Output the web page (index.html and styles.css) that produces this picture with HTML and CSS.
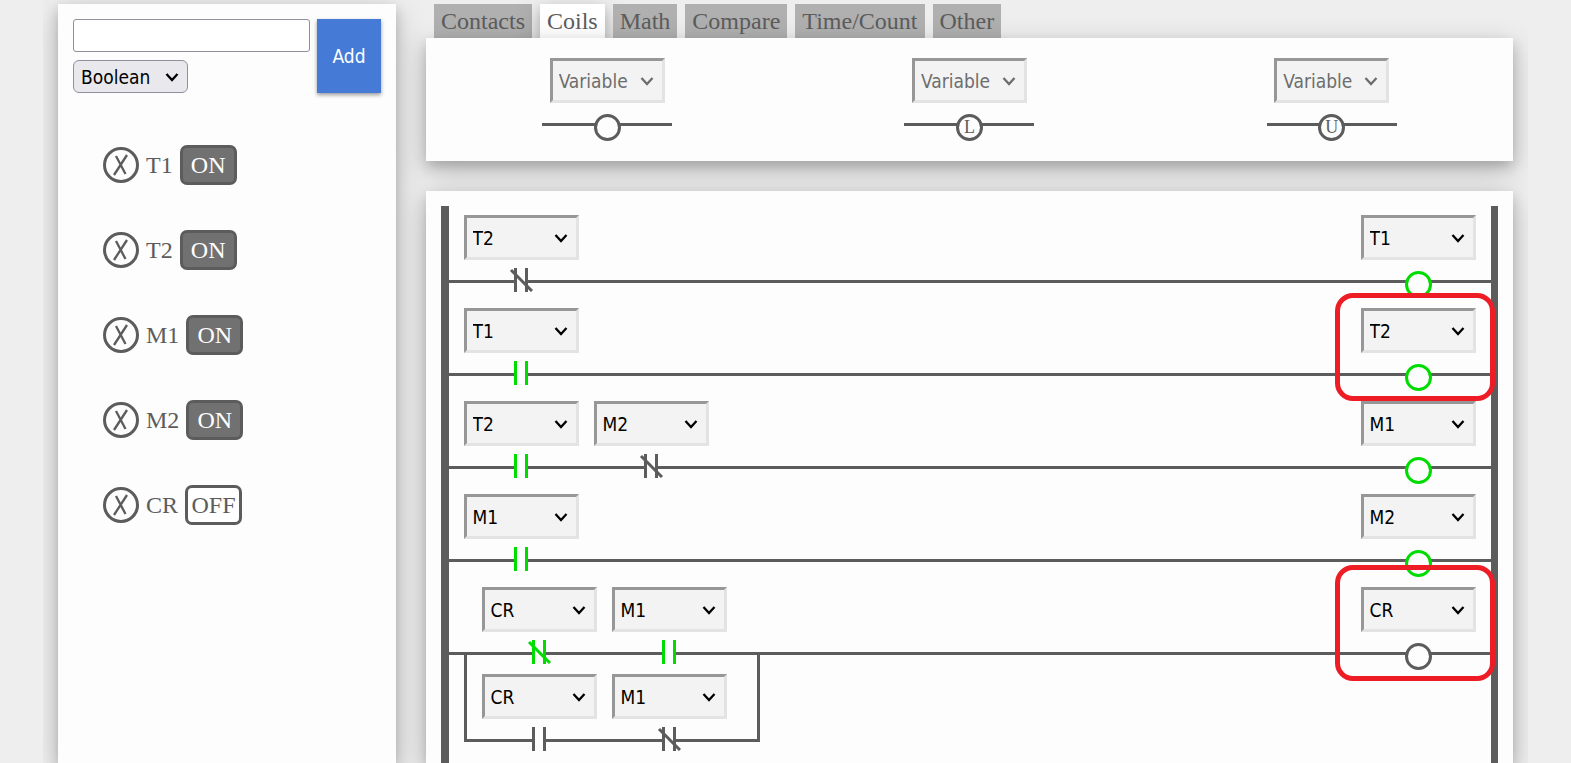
FILE: index.html
```
<!DOCTYPE html>
<html lang="en">
<head>
    <meta charset="UTF-8">
    <meta name="viewport" content="width=device-width, initial-scale=1.0">
    <title>Ladder Logic</title>
    <link rel="stylesheet" href="styles.css">
</head>
<body>
    <!-- Shared symbols -->
    <svg class="defs" aria-hidden="true">
        <symbol id="xio" viewBox="0 0 24 24">
            <rect class="gap" x="8" y="0" width="8" height="24"/>
            <path d="M6.500 0V24M17.500 0V24"/>
            <path d="M2 2L23 23"/>
        </symbol>
        <symbol id="xic" viewBox="0 0 24 24">
            <rect class="gap" x="8" y="0" width="8" height="24"/>
            <path d="M6.500 0V24M17.500 0V24"/>
        </symbol>
        <symbol id="cross" viewBox="0 0 30 30">
            <path d="M10 6L19.500 24M21 5L8 25"/>
        </symbol>
    </svg>

    <div class="app">
        <aside class="panel variables">
            <form class="add-form">
                <div class="fields">
                    <input type="text" class="name-input" aria-label="Variable name">
                    <select class="type-select" aria-label="Variable type">
                        <option>Boolean</option>
                        <option>Number</option>
                    </select>
                </div>
                <button type="button" class="add-btn">Add</button>
            </form>
            <ul class="variable-list">
                <li>
                    <button class="delete-btn" aria-label="Delete T1"><svg><use href="#cross"/></svg></button>
                    <span>T1</span>
                    <button class="toggle on">ON</button>
                </li>
                <li>
                    <button class="delete-btn" aria-label="Delete T2"><svg><use href="#cross"/></svg></button>
                    <span>T2</span>
                    <button class="toggle on">ON</button>
                </li>
                <li>
                    <button class="delete-btn" aria-label="Delete M1"><svg><use href="#cross"/></svg></button>
                    <span>M1</span>
                    <button class="toggle on">ON</button>
                </li>
                <li>
                    <button class="delete-btn" aria-label="Delete M2"><svg><use href="#cross"/></svg></button>
                    <span>M2</span>
                    <button class="toggle on">ON</button>
                </li>
                <li>
                    <button class="delete-btn" aria-label="Delete CR"><svg><use href="#cross"/></svg></button>
                    <span>CR</span>
                    <button class="toggle">OFF</button>
                </li>
            </ul>
        </aside>

        <main class="workspace">
            <nav class="tabs">
                <button class="tab">Contacts</button>
                <button class="tab active">Coils</button>
                <button class="tab">Math</button>
                <button class="tab">Compare</button>
                <button class="tab">Time/Count</button>
                <button class="tab">Other</button>
            </nav>

            <section class="panel toolbox">
                <div class="tool">
                    <div class="cell wire">
                        <select class="var-select" aria-label="Coil variable" disabled><option>Variable</option></select>
                        <div class="coil"></div>
                    </div>
                </div>
                <div class="tool">
                    <div class="cell wire">
                        <select class="var-select" aria-label="Latch variable" disabled><option>Variable</option></select>
                        <div class="coil">L</div>
                    </div>
                </div>
                <div class="tool">
                    <div class="cell wire">
                        <select class="var-select" aria-label="Unlatch variable" disabled><option>Variable</option></select>
                        <div class="coil">U</div>
                    </div>
                </div>
            </section>

            <section class="panel program">
                <div class="ladder">
                    <div class="rung wire">
                        <div class="cell">
                            <select class="var-select" aria-label="Contact"><option>T2</option></select>
                            <svg class="contact"><use href="#xio"/></svg>
                        </div>
                        <div class="cell output">
                            <select class="var-select" aria-label="Coil"><option>T1</option></select>
                            <div class="coil live"></div>
                        </div>
                    </div>

                    <div class="rung wire">
                        <div class="cell">
                            <select class="var-select" aria-label="Contact"><option>T1</option></select>
                            <svg class="contact live"><use href="#xic"/></svg>
                        </div>
                        <div class="cell output marked">
                            <select class="var-select" aria-label="Coil"><option>T2</option></select>
                            <div class="coil live"></div>
                        </div>
                    </div>

                    <div class="rung wire">
                        <div class="cell">
                            <select class="var-select" aria-label="Contact"><option>T2</option></select>
                            <svg class="contact live"><use href="#xic"/></svg>
                        </div>
                        <div class="cell">
                            <select class="var-select" aria-label="Contact"><option>M2</option></select>
                            <svg class="contact"><use href="#xio"/></svg>
                        </div>
                        <div class="cell output">
                            <select class="var-select" aria-label="Coil"><option>M1</option></select>
                            <div class="coil live"></div>
                        </div>
                    </div>

                    <div class="rung wire">
                        <div class="cell">
                            <select class="var-select" aria-label="Contact"><option>M1</option></select>
                            <svg class="contact live"><use href="#xic"/></svg>
                        </div>
                        <div class="cell output">
                            <select class="var-select" aria-label="Coil"><option>M2</option></select>
                            <div class="coil live"></div>
                        </div>
                    </div>

                    <div class="rung wire">
                        <div class="branch">
                            <div class="path">
                                <div class="cell">
                                    <select class="var-select" aria-label="Contact"><option>CR</option></select>
                                    <svg class="contact live"><use href="#xio"/></svg>
                                </div>
                                <div class="cell">
                                    <select class="var-select" aria-label="Contact"><option>M1</option></select>
                                    <svg class="contact live"><use href="#xic"/></svg>
                                </div>
                            </div>
                            <div class="path">
                                <div class="cell">
                                    <select class="var-select" aria-label="Contact"><option>CR</option></select>
                                    <svg class="contact"><use href="#xic"/></svg>
                                </div>
                                <div class="cell">
                                    <select class="var-select" aria-label="Contact"><option>M1</option></select>
                                    <svg class="contact"><use href="#xio"/></svg>
                                </div>
                            </div>
                        </div>
                        <div class="cell output marked tall">
                            <select class="var-select" aria-label="Coil"><option>CR</option></select>
                            <div class="coil"></div>
                        </div>
                    </div>
                </div>
            </section>
        </main>
    </div>
</body>
</html>
```

FILE: styles.css
```
:root {
    --ink: #5c5c5c;
    --paper: #fdfdfd;
    --live: #00dc00;
    --shadow: 0 6px 12px rgba(0, 0, 0, 0.2), 0 9px 30px rgba(0, 0, 0, 0.19);
    --ui-font: "DejaVu Sans Condensed", "DejaVu Sans", sans-serif;
}
* {
    box-sizing: border-box;
}
body {
    margin: 0;
    background: #eee;
    color: var(--ink);
    font-family: "Liberation Serif", serif;
    font-size: 24px;
}
button, select, input {
    margin: 0;
    font: inherit;
    color: inherit;
}
.defs {
    position: absolute;
    width: 0;
    height: 0;
}
.app {
    display: flex;
    gap: 30px;
    height: 100vh;
    margin: 0 43px;
    padding: 4px 15px 0;
    overflow: hidden;
}
.panel {
    background: var(--paper);
    box-shadow: var(--shadow);
}

/* Variables */
.variables {
    flex: none;
    width: 338px;
    padding: 15px;
}
.add-form {
    display: flex;
    gap: 7px;
    font-family: var(--ui-font);
    font-size: 19px;
}
.fields {
    flex: 1;
    display: flex;
    flex-direction: column;
    align-items: flex-start;
    gap: 8px;
}
.name-input {
    width: 100%;
    height: 33px;
    border: 1px solid #8f8f9d;
    border-radius: 3px;
    background: white;
}
select {
    appearance: none;
    background-image: url("data:image/svg+xml,%3Csvg xmlns='http://www.w3.org/2000/svg' width='14' height='10'%3E%3Cpath d='M1.500 2L7 8L12.500 2' fill='none' stroke='black' stroke-width='2.300'/%3E%3C/svg%3E");
    background-repeat: no-repeat;
    background-position: right 8px center;
    color: black;
}
.type-select {
    width: 115px;
    height: 33px;
    padding: 0 7px;
    border: 1px solid #8f8f9d;
    border-radius: 6px;
    background-color: #e9e9ed;
}
.add-btn {
    width: 64px;
    padding: 0;
    border: none;
    background: #457ad6;
    color: white;
    box-shadow: 0 2px 4px rgba(0, 0, 0, 0.4);
}
.variable-list {
    display: flex;
    flex-direction: column;
    gap: 45px;
    margin: 52px 0 0;
    padding: 0 30px;
    list-style: none;
}
.variable-list li {
    display: flex;
    align-items: center;
    gap: 7px;
}
.delete-btn {
    display: flex;
    width: 36px;
    height: 36px;
    padding: 0;
    border: 3px solid var(--ink);
    border-radius: 50%;
    background: none;
}
.delete-btn svg {
    width: 30px;
    height: 30px;
    stroke: var(--ink);
    stroke-width: 2.3;
}
.toggle {
    width: 57px;
    height: 40px;
    padding: 0;
    border: 3px solid var(--ink);
    border-radius: 7px;
    background: white;
}
.toggle.on {
    background: #717171;
    color: white;
}

/* Tabs and toolbox */
.workspace {
    flex: 1;
    display: flex;
    flex-direction: column;
}
.tabs {
    display: flex;
    gap: 8px;
    padding: 0 8px;
}
.tab {
    height: 34px;
    padding: 0 7px;
    border: none;
    background: #b0b0b0;
}
.tab.active {
    background: white;
    box-shadow: var(--shadow);
}
.toolbox {
    display: flex;
    margin-bottom: 30px;
    padding: 11px 0 19px;
}
.tool {
    flex: 1;
    display: flex;
    justify-content: center;
}

/* Ladder */
.program {
    flex: 1;
    display: flex;
    padding: 15px 15px 0;
}
.ladder {
    flex: 1;
    border: solid var(--ink);
    border-width: 0 7px 0 8px;
}
.wire {
    background: linear-gradient(var(--ink), var(--ink)) 0 74px / 100% 3px no-repeat;
}
.rung {
    display: flex;
    align-items: flex-start;
    padding: 0 8px 0 7px;
}
.cell {
    display: flex;
    flex-direction: column;
    align-items: center;
    width: 130px;
    height: 93px;
    padding-top: 9px;
}
.output {
    margin-left: auto;
}
.var-select {
    flex: none;
    width: 115px;
    height: 45px;
    padding: 0 6px;
    border: 3px solid;
    border-color: #979797 #e3e3e3 #e3e3e3 #979797;
    border-radius: 0;
    background-color: #f3f3f3;
    font-family: var(--ui-font);
    font-size: 19px;
}
.var-select:disabled {
    background-image: url("data:image/svg+xml,%3Csvg xmlns='http://www.w3.org/2000/svg' width='14' height='10'%3E%3Cpath d='M1.500 2L7 8L12.500 2' fill='none' stroke='%236d6d6d' stroke-width='2.300'/%3E%3C/svg%3E");
    color: #6d6d6d;
    opacity: 1;
}
.contact {
    width: 24px;
    height: 24px;
    margin-top: 8px;
    stroke: var(--ink);
    stroke-width: 3;
}
.contact.live {
    stroke: var(--live);
}
.gap {
    fill: var(--paper);
    stroke: none;
}
.coil {
    width: 27px;
    height: 27px;
    margin-top: 11px;
    border: 3px solid var(--ink);
    border-radius: 50%;
    background: var(--paper);
    font-size: 18px;
    line-height: 21px;
    text-align: center;
}
.coil.live {
    border-color: var(--live);
}

/* Parallel paths, joined to the rung by the side wires */
.branch {
    position: relative;
    isolation: isolate;
    margin-left: 8px;
    padding: 0 26px 0 10px;
}
.branch::before {
    content: "";
    position: absolute;
    z-index: -1;
    inset: 74px 0 10px;
    border: 3px solid var(--ink);
}
.path {
    display: flex;
}
.path .cell {
    height: 87px;
}

/* Red outline round an output */
.marked {
    position: relative;
}
.marked::after {
    content: "";
    position: absolute;
    inset: -6px -12px -9px -18px;
    border: 5px solid #ee1c24;
    border-radius: 18px;
    pointer-events: none;
}
.marked.tall::after {
    inset: -13px -12px -10px -18px;
}
```
